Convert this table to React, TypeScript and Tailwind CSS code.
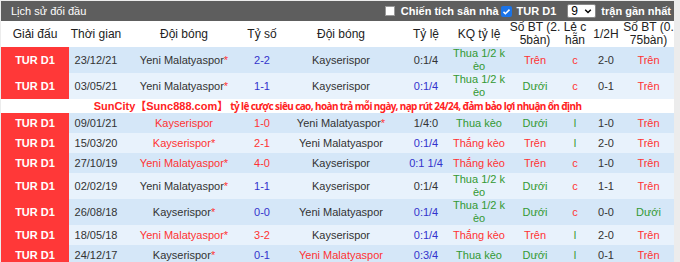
import React from "react";

type Row = {
  date: string;
  home: string;
  homeStar?: boolean;
  homeRed?: boolean;
  score: string;
  scoreRed?: boolean;
  away: string;
  awayStar?: boolean;
  awayRed?: boolean;
  hdp: string;
  hdpBlue?: boolean;
  kq: "win" | "lose" | "half";
  bt: "Trên" | "Dưới";
  lc: "c" | "l";
  h1: string;
  bt2: "Trên" | "Dưới";
  tall?: boolean;
};

const before: Row[] = [
  { date: "23/12/21", home: "Yeni Malatyaspor", homeStar: true, score: "2-2", away: "Kayserispor", hdp: "0:1/4", kq: "half", bt: "Trên", lc: "c", h1: "2-0", bt2: "Trên", tall: true },
  { date: "03/05/21", home: "Yeni Malatyaspor", homeStar: true, score: "1-1", away: "Kayserispor", hdp: "0:1/4", hdpBlue: true, kq: "half", bt: "Dưới", lc: "c", h1: "0-1", bt2: "Trên", tall: true },
];

const after: Row[] = [
  { date: "09/01/21", home: "Kayserispor", homeRed: true, score: "1-0", scoreRed: true, away: "Yeni Malatyaspor", awayStar: true, hdp: "1/4:0", kq: "lose", bt: "Dưới", lc: "l", h1: "1-0", bt2: "Trên" },
  { date: "15/03/20", home: "Kayserispor", homeStar: true, homeRed: true, score: "2-1", scoreRed: true, away: "Yeni Malatyaspor", hdp: "0:1/4", hdpBlue: true, kq: "win", bt: "Trên", lc: "l", h1: "2-0", bt2: "Trên" },
  { date: "27/10/19", home: "Yeni Malatyaspor", homeStar: true, homeRed: true, score: "4-0", scoreRed: true, away: "Kayserispor", hdp: "0:1 1/4", hdpBlue: true, kq: "win", bt: "Trên", lc: "c", h1: "1-0", bt2: "Trên" },
  { date: "02/02/19", home: "Yeni Malatyaspor", homeStar: true, score: "1-1", away: "Kayserispor", hdp: "0:1/4", kq: "half", bt: "Dưới", lc: "c", h1: "1-1", bt2: "Trên", tall: true },
  { date: "26/08/18", home: "Kayserispor", homeStar: true, score: "0-0", away: "Yeni Malatyaspor", hdp: "0:1/4", hdpBlue: true, kq: "half", bt: "Dưới", lc: "c", h1: "0-0", bt2: "Dưới", tall: true },
  { date: "18/05/18", home: "Yeni Malatyaspor", homeStar: true, homeRed: true, score: "3-2", scoreRed: true, away: "Kayserispor", hdp: "0:1/4", hdpBlue: true, kq: "win", bt: "Trên", lc: "l", h1: "2-0", bt2: "Trên" },
  { date: "24/12/17", home: "Kayserispor", homeStar: true, score: "0-1", away: "Yeni Malatyaspor", awayRed: true, hdp: "0:3/4", hdpBlue: true, kq: "lose", bt: "Dưới", lc: "l", h1: "0-1", bt2: "Trên" },
];

const Team = ({ name, star, red }: { name: string; star?: boolean; red?: boolean }) => (
  <span className={red ? "text-[#ff3333]" : "text-[#333]"}>
    {name}
    {star && <span className="text-[#ff3333]">*</span>}
  </span>
);

const OverUnder = ({ v }: { v: "Trên" | "Dưới" }) => (
  <span className={v === "Trên" ? "text-[#ff3333]" : "text-[#339933]"}>{v}</span>
);

const MatchRow = ({ r, i }: { r: Row; i: number }) => (
  <tr className={`${r.tall ? "h-[26px]" : "h-[20px]"} ${i % 2 === 0 ? "bg-[#d5e7f8]" : "bg-[#e8f2fc]"}`}>
    <td className="bg-[#ff3838] font-bold text-white">TUR D1</td>
    <td className="text-[#333]">{r.date}</td>
    <td>
      <Team name={r.home} star={r.homeStar} red={r.homeRed} />
    </td>
    <td className={r.scoreRed ? "text-[#ff3333]" : "text-[#3333cc]"}>{r.score}</td>
    <td>
      <Team name={r.away} star={r.awayStar} red={r.awayRed} />
    </td>
    <td className={r.hdpBlue ? "text-[#3333cc]" : "text-[#333]"}>{r.hdp}</td>
    <td>
      {r.kq === "win" && <span className="text-[#ff3333]">Thắng kèo</span>}
      {r.kq === "lose" && <span className="text-[#339933]">Thua kèo</span>}
      {r.kq === "half" && (
        <span className="text-[#339933]">
          Thua 1/2 k
          <br />
          èo
        </span>
      )}
    </td>
    <td>
      <OverUnder v={r.bt} />
    </td>
    <td className={r.lc === "c" ? "text-[#ff3333]" : "text-[#339933]"}>{r.lc}</td>
    <td className="text-[#333]">{r.h1}</td>
    <td>
      <OverUnder v={r.bt2} />
    </td>
  </tr>
);

export default function App() {
  return (
    <div className="w-[680px] h-[262px] overflow-hidden bg-[#ececec] pl-px pr-[6px] pt-px font-['Liberation_Sans',Arial,sans-serif]">
      {/* title bar */}
      <div className="flex h-[20px] items-center justify-between bg-[#5e5e5e] pl-[10px] pr-[3px] text-[11px] text-white">
        <span>Lịch sử đối đầu</span>
        <div className="flex items-center font-bold">
          <span className="mr-[6px] ml-[3px] h-[10px] w-[10px] border border-[#999] bg-white" />
          <span className="mr-[2px]">Chiến tích sân nhà</span>
          <span className="mr-[5px] flex h-[11px] w-[11px] items-center justify-center rounded-[2px] bg-[#1a73e8]">
            <svg viewBox="0 0 12 12" className="h-[9px] w-[9px]" fill="none" stroke="white" strokeWidth="2">
              <path d="M2 6.5l2.5 2.5L10 3.5" />
            </svg>
          </span>
          <span className="mr-[11px]">TUR D1</span>
          <span className="mr-[5px] flex h-[14px] w-[29px] items-center justify-between rounded-[2px] border border-[#888] bg-white pl-[3px] pr-[3px] text-[12px] font-normal text-black">
            9
            <svg viewBox="0 0 10 10" className="h-[8px] w-[8px]" fill="none" stroke="black" strokeWidth="1.8">
              <path d="M1.5 3.5L5 7l3.5-3.5" />
            </svg>
          </span>
          <span>trận gần nhất</span>
        </div>
      </div>

      <table className="w-[673px] table-fixed border-collapse whitespace-nowrap text-center text-[11px] leading-[13px] [&_td]:p-0 [&_th]:p-0">
        <colgroup>
          <col className="w-[68px]" />
          <col className="w-[54px]" />
          <col className="w-[122px]" />
          <col className="w-[34px]" />
          <col className="w-[124px]" />
          <col className="w-[46px]" />
          <col className="w-[60px]" />
          <col className="w-[52px]" />
          <col className="w-[28px]" />
          <col className="w-[34px]" />
          <col className="w-[51px]" />
        </colgroup>
        <thead>
          <tr className="h-[26px] bg-white text-[12px] text-[#222]">
            <th className="font-normal">Giải đấu</th>
            <th className="font-normal">Thời gian</th>
            <th className="font-normal">Đội bóng</th>
            <th className="font-normal">Tỷ số</th>
            <th className="font-normal">Đội bóng</th>
            <th className="font-normal">Tỷ lệ</th>
            <th className="font-normal">KQ tỷ lệ</th>
            <th className="font-normal">
              Số BT (2.
              <br />
              5bàn)
            </th>
            <th className="font-normal">
              Lẻ c
              <br />
              hẵn
            </th>
            <th className="font-normal">1/2H</th>
            <th className="font-normal">
              Số BT (0.
              <br />
              75bàn)
            </th>
          </tr>
        </thead>
        <tbody>
          {before.map((r, i) => (
            <MatchRow key={r.date} r={r} i={i} />
          ))}
          <tr className="h-[13px] bg-white">
            <td colSpan={11} className="text-[11px] font-bold text-[#ff2222]">
              <span className="font-['Liberation_Sans',sans-serif]">SunCity</span>
              <span className="font-['Noto_Sans_CJK_SC',sans-serif] text-[11px]">【</span>
              <span className="font-['Liberation_Sans',sans-serif]">Sunc888.com</span>
              <span className="font-['Noto_Sans_CJK_SC',sans-serif] text-[11px]">】</span>
              <span className="font-['Noto_Sans',sans-serif] text-[10px] tracking-[-0.6px]"> tỷ lệ cược siêu cao, hoàn trả mỗi ngày, nạp rút 24/24, đảm bảo lợi nhuận ổn định</span>
            </td>
          </tr>
          {after.map((r, i) => (
            <MatchRow key={r.date} r={r} i={i} />
          ))}
        </tbody>
      </table>
    </div>
  );
}
